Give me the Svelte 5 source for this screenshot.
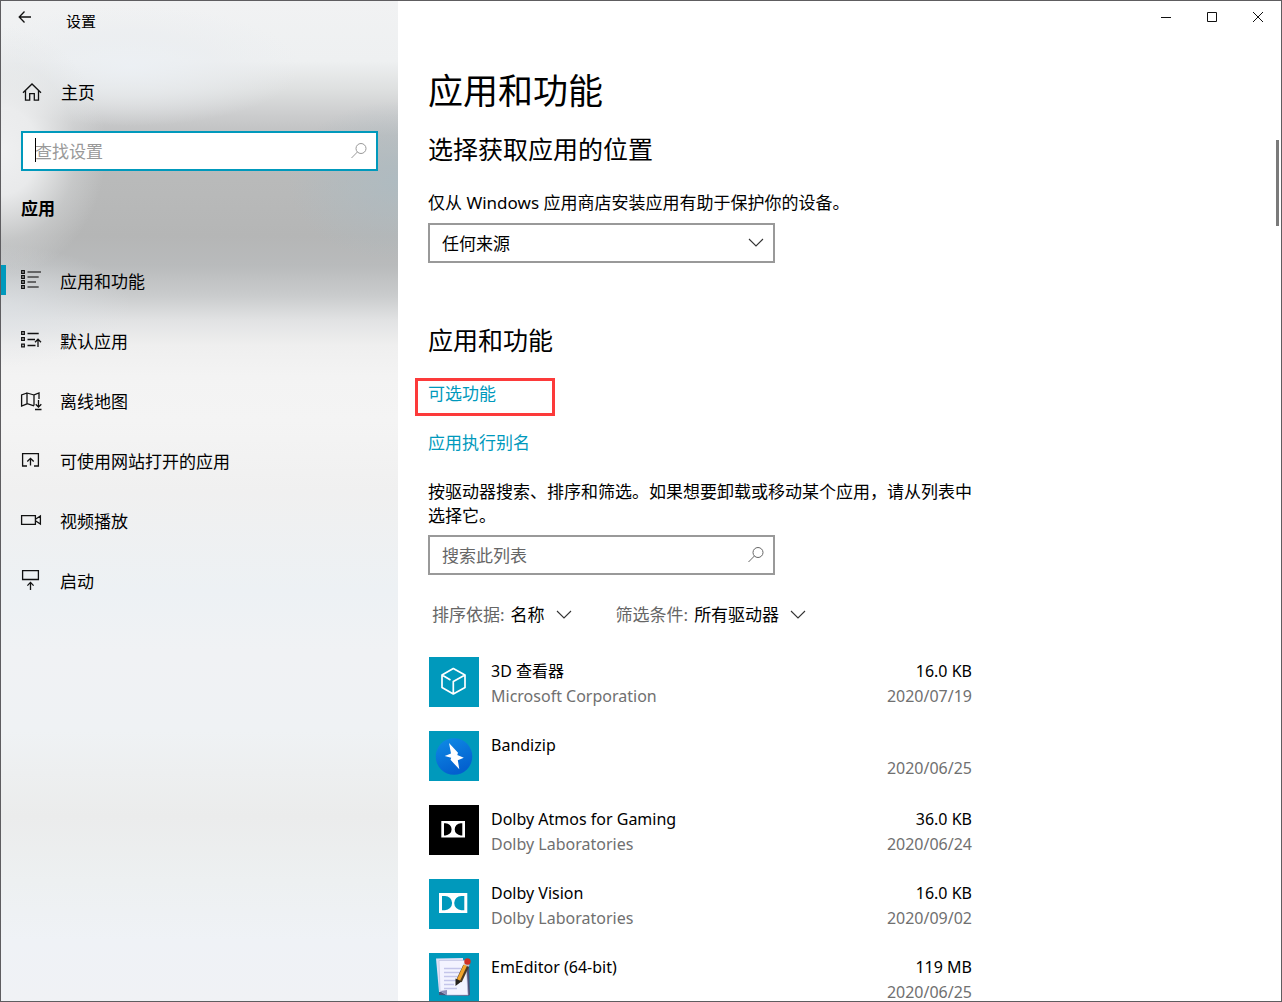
<script>
	const navItems = [
		{ icon: 'list', label: '应用和功能' },
		{ icon: 'defaults', label: '默认应用' },
		{ icon: 'map', label: '离线地图' },
		{ icon: 'website', label: '可使用网站打开的应用' },
		{ icon: 'video', label: '视频播放' },
		{ icon: 'startup', label: '启动' }
	];

	const apps = [
		{ icon: 'cube', name: '3D 查看器', publisher: 'Microsoft Corporation', size: '16.0 KB', date: '2020/07/19' },
		{ icon: 'bolt', name: 'Bandizip', publisher: '', size: '', date: '2020/06/25' },
		{ icon: 'atmos', name: 'Dolby Atmos for Gaming', publisher: 'Dolby Laboratories', size: '36.0 KB', date: '2020/06/24' },
		{ icon: 'vision', name: 'Dolby Vision', publisher: 'Dolby Laboratories', size: '16.0 KB', date: '2020/09/02' },
		{ icon: 'editor', name: 'EmEditor (64-bit)', publisher: '', size: '119 MB', date: '2020/06/25' }
	];

	let active = $state('list');
	let settingsQuery = $state('');
	let listQuery = $state('');
</script>

<svelte:head>
	<title>设置</title>
</svelte:head>

{#snippet chevron()}
	<svg class="chevron" width="16" height="10" viewBox="0 0 16 10" aria-hidden="true">
		<path d="M1 1 L8 8 L15 1" />
	</svg>
{/snippet}

{#snippet magnifier()}
	<svg class="magnifier" width="18" height="18" viewBox="0 0 18 18" aria-hidden="true">
		<circle cx="11" cy="6.5" r="5" />
		<path d="M7.4 10 L1.5 16" />
	</svg>
{/snippet}

<div class="window">
	<aside>
		<div class="titlebar">
			<button class="back" aria-label="后退">
				<svg width="14" height="14" viewBox="0 0 14 14"><path d="M13 7 H1.5 M6.5 1.5 L1.2 7 L6.5 12.5" /></svg>
			</button>
			<span>设置</span>
		</div>

		<a class="home" href="#home">
			<svg width="20" height="20" viewBox="0 0 20 20" aria-hidden="true">
				<path d="M2 9.8 L11 1 L20 9.8 M4.5 7.8 V17.2 H8.7 V10.7 H13.3 V17.2 H17.5 V7.8" />
			</svg>
			<span>主页</span>
		</a>

		<div class="box search">
			<input type="text" aria-label="查找设置" placeholder="查找设置" bind:value={settingsQuery} />
			<span class="caret"></span>
			{@render magnifier()}
		</div>

		<h2 class="category">应用</h2>

		<nav>
			{#each navItems as item}
				<a href="#{item.icon}" class:active={active === item.icon} onclick={() => (active = item.icon)}>
					<svg width="20" height="20" viewBox="0 0 20 20" aria-hidden="true">
						{#if item.icon === 'list'}
							<path d="M.7 .7h2.6v2.6h-2.6z M.7 5.7h2.6v2.6h-2.6z M.7 10.7h2.6v2.6h-2.6z M.7 15.7h2.6v2.6h-2.6z" />
							<path class="thin" d="M6.5 2 H20 M6.5 7 H17.7 M6.5 12 H15 M6.5 17 H17.7" />
						{:else if item.icon === 'defaults'}
							<path d="M.7 1.7h2.6v2.6h-2.6z M.7 7.7h2.6v2.6h-2.6z M.7 14.2h2.6v2.6h-2.6z" />
							<path d="M6.5 3.5 H17.7 M6.5 9.5 H14 M6.5 15.5 H14.5 M17 9.5 V17 M14 12.2 L17 9.2 L20 12.2" />
						{:else if item.icon === 'map'}
							<path d="M13 15.6 V5 L18 3 V9 M13 5 L6 3 V13.5 L13 15.8 M6 3 L.6 5 V16 L6 13.8 M17.5 10 V17 M14.7 14.2 L17.5 17 L20.3 14.2 M14 19.5 H20.5" />
						{:else if item.icon === 'website'}
							<path d="M6 16 H1.6 V3.6 H17.4 V16 H13 M9.5 15.5 V8.5 M6.3 11.5 L9.5 8.3 L12.7 11.5" />
						{:else if item.icon === 'video'}
							<path d="M.6 5.6 H14.4 V14.4 H.6z M14.8 9 L19.4 6 V14 L14.8 11" />
						{:else}
							<path d="M1.6 .6 H17.4 V9.5 H1.6z M9.5 20 V12.5 M6.4 15.6 L9.5 12.4 L12.6 15.6" />
						{/if}
					</svg>
					<span>{item.label}</span>
				</a>
			{/each}
		</nav>
	</aside>

	<main>
		<div class="caption">
			<button aria-label="最小化"><svg width="12" height="12" viewBox="0 0 12 12"><path d="M1 6.5 H11" /></svg></button>
			<button aria-label="最大化"><svg width="12" height="12" viewBox="0 0 12 12"><path d="M1.5 1.5 H10.5 V10.5 H1.5z" /></svg></button>
			<button aria-label="关闭"><svg width="12" height="12" viewBox="0 0 12 12"><path d="M1 1 L11 11 M11 1 L1 11" /></svg></button>
		</div>

		<div class="content">
			<h1>应用和功能</h1>

			<h2 class="source">选择获取应用的位置</h2>
			<label for="source">仅从 Windows 应用商店安装应用有助于保护你的设备。</label>
			<div class="box">
				<select id="source">
					<option>任何来源</option>
				</select>
				{@render chevron()}
			</div>

			<h2 class="features">应用和功能</h2>
			<a class="link marked" href="#optional">可选功能</a>
			<a class="link" href="#aliases">应用执行别名</a>

			<p>按驱动器搜索、排序和筛选。如果想要卸载或移动某个应用，请从列表中选择它。</p>
			<div class="box">
				<input type="text" aria-label="搜索此列表" placeholder="搜索此列表" bind:value={listQuery} />
				{@render magnifier()}
			</div>

			<div class="filters">
				<label>
					<span>排序依据:</span>
					<select><option>名称</option></select>
					{@render chevron()}
				</label>
				<label>
					<span>筛选条件:</span>
					<select><option>所有驱动器</option></select>
					{@render chevron()}
				</label>
			</div>

			<ul>
				{#each apps as app}
					<li>
						<svg class="logo {app.icon}" width="50" height="50" viewBox="0 0 50 50" aria-hidden="true">
							{#if app.icon === 'cube'}
								<path class="cube-line" d="M24.3 11.5 L36 18 V30.500 L24.3 37 L13 30.500 V18z M13 18 L21.5 23 M36 18 L24.3 24.5 V37" />
							{:else if app.icon === 'bolt'}
								<defs>
									<linearGradient id="disc" x1="0" y1="0" x2="0.4" y2="1">
										<stop offset="0" stop-color="#0f8ce6" />
										<stop offset="1" stop-color="#0360cf" />
									</linearGradient>
								</defs>
								<circle cx="25" cy="25.5" r="18.3" fill="url(#disc)" />
								<path fill="#fff" d="M20 12 L29 21.800 L28.300 24 L34.800 26.800 L28.800 29.200 L30.300 38.300 L21.500 28.800 L22.200 26.800 L15.700 25 L22 22.400z" />
							{:else if app.icon === 'atmos'}
								<path fill="#fff" fill-rule="evenodd" d="M12.300 16 H36 V32.500 H12.300z M15 18.200 V30.400 H16.500 A6.100 6.100 0 0 0 16.500 18.200z M33.300 18.200 V30.400 H31.800 A6.100 6.100 0 0 1 31.800 18.200z" />
							{:else if app.icon === 'vision'}
								<path fill="#fff" fill-rule="evenodd" d="M10 14 H38.300 V34 H10z M13 17 V31.200 H16 A7.100 7.100 0 0 0 16 17z M35.300 17 V31.200 H32.300 A7.100 7.100 0 0 1 32.300 17z" />
							{:else}
								<path fill="#4c5278" d="M12 10 L40 7 L41 42 L38 43 L10 42z" />
								<path fill="#dfe0f5" d="M7 5.5 L34 5 L36 38 L10 39z" />
								<path fill="#f3f3ff" stroke="#b7b8dd" stroke-width="0.6" d="M10 7.5 H37 L39 42 H18 L11 38z" />
								<path stroke="#c4c5ea" d="M15 15.5 H32 M15 19.5 H31 M15 23.5 H30 M15 27.5 H27 M15 31.5 H25 M15 35.5 H28" />
								<path fill="#8d90b8" d="M11 38 L18 37 V42z" />
								<path stroke="#4e3b22" stroke-width="6" d="M37 13 L30 28" />
								<path stroke="#f2a52c" stroke-width="3.4" d="M36.5 12 L29.5 27" />
								<path fill="#26221d" d="M26.5 25.5 L32.5 28.5 L26.500 33z" />
								<path stroke="#c7c7c9" stroke-width="6" d="M38 10.5 L37 12.5" />
								<circle cx="38.5" cy="8.5" r="3.2" fill="#cf3026" />
							{/if}
						</svg>
						<div class="info">
							<span class="name">{app.name}</span>
							<span class="muted">{app.publisher}</span>
						</div>
						<div class="meta">
							<span>{app.size}</span>
							<span class="muted">{app.date}</span>
						</div>
					</li>
				{/each}
			</ul>
		</div>
		<div class="thumb"></div>
	</main>
</div>

<style>
	:global(body) {
		margin: 0;
	}

	.window {
		box-sizing: border-box;
		display: flex;
		height: 100vh;
		border: 1px solid #5e5d60;
		overflow: hidden;
		background: #fff;
		color: #000;
		font-family: 'Noto Sans', 'Noto Sans CJK SC', sans-serif;
		font-size: 17px;
		line-height: 24px;
	}

	h1,
	h2,
	p,
	ul {
		margin: 0;
		padding: 0;
		font-weight: normal;
	}

	svg {
		flex: none;
		fill: none;
		stroke: #111;
		stroke-width: 1.3;
	}

	button {
		display: flex;
		align-items: center;
		justify-content: center;
		padding: 0;
		border: none;
		background: none;
	}

	a {
		color: inherit;
		text-decoration: none;
	}

	input,
	select {
		box-sizing: border-box;
		margin: 0;
		border: none;
		outline: none;
		background: none;
		color: inherit;
		font: inherit;
		appearance: none;
	}

	/* sidebar: acrylic backdrop, soft highlights over a vertical ramp */
	aside {
		flex: 0 0 397px;
		background:
			radial-gradient(ellipse 105px 125px at 0 150px, #eff0f1 0, rgba(238, 239, 240, 0.9) 35%, rgba(225, 227, 228, 0.35) 72%, rgba(215, 217, 218, 0) 100%),
			radial-gradient(ellipse 170px 60px at 130px 65px, rgba(236, 240, 244, 0.9) 0, rgba(234, 237, 240, 0.6) 50%, rgba(230, 233, 236, 0) 100%),
			radial-gradient(ellipse 130px 60px at 0 305px, rgba(222, 226, 230, 0.7) 0, rgba(214, 220, 224, 0) 100%),
			radial-gradient(ellipse 110px 80px at 397px 180px, rgba(172, 187, 194, 0.8) 0, rgba(176, 187, 192, 0) 100%),
			linear-gradient(
				180deg,
				#f1f2f3 0,
				#eef0f1 60px,
				#dee0e0 88px,
				#cbcccd 115px,
				#bfc0c1 135px,
				#babbbb 165px,
				#b5b6b6 235px,
				#b9bbbc 265px,
				#cacccd 295px,
				#e2e3e4 320px,
				#efefef 345px,
				#f3f3f3 375px,
				#f4f4f4 420px,
				#f0f0f0 490px,
				#edf1f4 590px,
				#f0f2f4 650px,
				#eff2f4 730px,
				#ebecec 815px,
				#edf0f1 880px,
				#eff2f6 940px,
				#f0f2f5 100%
			);
	}

	.titlebar {
		display: flex;
		align-items: center;
		height: 40px;
		font-size: 15px;
	}

	.back {
		width: 48px;
		height: 32px;
		margin: 0 17px 8px 0;
	}

	.home {
		display: flex;
		align-items: center;
		gap: 20px;
		height: 60px;
		margin: 22px 20px 8px;
	}

	.home svg {
		overflow: visible;
	}

	.box {
		position: relative;
		box-sizing: border-box;
		display: flex;
		max-width: 347px;
		height: 40px;
		border: 2px solid #999;
		background: #fff;
	}

	.box input,
	.box select {
		width: 100%;
		padding: 1px 40px 0 12px;
	}

	.box ::placeholder {
		color: #666;
		opacity: 1;
	}

	.search {
		max-width: none;
		margin: 0 20px;
		border-color: #0099bc;
	}

	.search ::placeholder {
		color: #999;
	}

	.search .magnifier {
		stroke: #999;
	}

	.caret {
		position: absolute;
		left: 12px;
		top: 5px;
		width: 1px;
		height: 24px;
		background: #000;
	}

	.magnifier {
		position: absolute;
		right: 8px;
		top: 9px;
		stroke: #666;
		stroke-width: 1;
	}

	.chevron {
		stroke: #333;
		stroke-width: 1.1;
		pointer-events: none;
	}

	.box .chevron {
		position: absolute;
		right: 9px;
		top: 13px;
	}

	.category {
		margin: 26px 20px 31px;
		font-size: 17px;
		font-weight: bold;
	}

	nav a {
		display: flex;
		align-items: center;
		height: 60px;
	}

	nav a::before {
		content: '';
		width: 5px;
		height: 30px;
		margin: 0 15px 4px 0;
	}

	nav a.active::before {
		background: #0099bc;
	}

	nav svg {
		margin: 0 19px 4px 0;
		overflow: visible;
	}

	.thin {
		stroke: #444;
	}

	/* content pane */
	main {
		position: relative;
		flex: 1;
		min-width: 0;
	}

	.caption {
		display: flex;
		justify-content: flex-end;
		height: 32px;
	}

	.caption button {
		width: 46px;
	}

	.caption svg {
		stroke-width: 1;
	}

	.content {
		max-width: 560px;
		padding: 35px 30px 0;
	}

	h1 {
		font-size: 35px;
		line-height: 46px;
	}

	.content h2 {
		font-size: 25px;
		line-height: 34px;
	}

	.content .source {
		margin: 18px 0 25px;
	}

	.content .features {
		margin: 60px 0 25px;
	}

	.content > label {
		display: block;
		margin-bottom: 8px;
	}

	.link {
		position: relative;
		display: block;
		width: fit-content;
		margin-bottom: 25px;
		color: #0099bc;
	}

	/* red callout frame around the link */
	.marked::after {
		content: '';
		position: absolute;
		left: -13px;
		top: -4px;
		width: 134px;
		height: 32px;
		border: 3px solid #fc3a3a;
	}

	p {
		margin-bottom: 7px;
	}

	.filters {
		display: flex;
		gap: 44px;
		margin: 28px 0 30px 4px;
	}

	.filters label {
		display: flex;
		align-items: center;
	}

	.filters span {
		margin-right: 6px;
		color: #666;
	}

	.filters select {
		padding: 0 11px 0 0;
		field-sizing: content;
	}

	ul {
		max-width: 544px;
		list-style: none;
	}

	li {
		display: flex;
		gap: 12px;
		height: 50px;
		margin: 0 0 24px 1px;
		font-size: 16px;
		line-height: 25px;
	}

	.logo {
		background: #0099bc;
		stroke: none;
	}

	.logo.atmos {
		background: #000;
	}

	.cube-line {
		stroke: #fff;
		stroke-width: 1.7;
		stroke-linejoin: round;
	}

	.info,
	.meta {
		display: flex;
		flex-direction: column;
		padding-top: 2px;
	}

	.info {
		flex: 1;
	}

	.meta {
		text-align: right;
	}

	.info span,
	.meta span {
		height: 25px;
	}

	.muted {
		color: #707070;
	}

	.thumb {
		position: absolute;
		right: 2px;
		top: 139px;
		width: 3px;
		height: 86px;
		background: #7a7a7a;
	}
</style>
